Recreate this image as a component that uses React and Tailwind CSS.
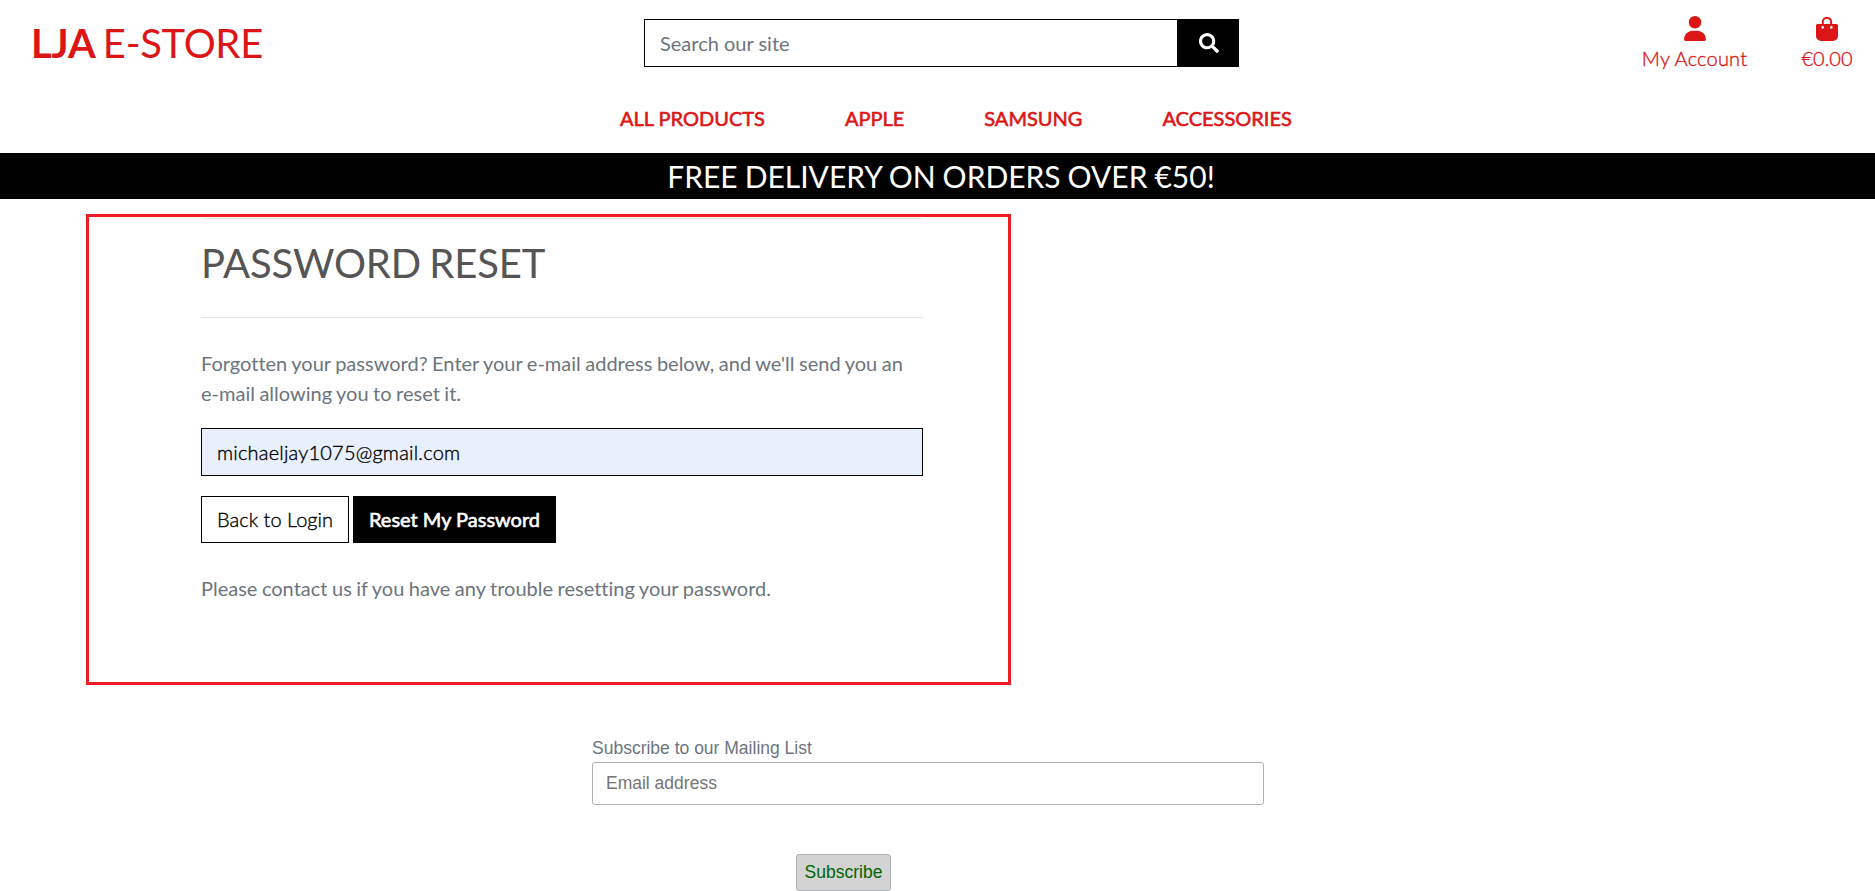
import { FaSearch } from "react-icons/fa";
import { FaUser } from "react-icons/fa6";

function BagIcon() {
  return (
    <svg viewBox="0 0 22 25" className="h-[25px] w-[22px]" fill="none">
      <path d="M6.8 9V6a4.2 4.2 0 0 1 8.4 0v3" stroke="currentColor" strokeWidth="2" />
      <path
        fillRule="evenodd"
        fill="currentColor"
        d="M1.5 8h19A1.5 1.5 0 0 1 22 9.500V20a5 5 0 0 1-5 5H5a5 5 0 0 1-5-5V9.500A1.500 1.500 0 0 1 1.500 8ZM6.700 10.100a1.300 1.300 0 1 0 0 2.600a1.300 1.300 0 0 0 0-2.600ZM15.300 10.100a1.300 1.300 0 1 0 0 2.600a1.300 1.300 0 0 0 0-2.600Z"
      />
    </svg>
  );
}

function Header() {
  return (
    <header className="flex h-[153px] flex-col text-[#dc1616]">
      <div className="flex h-[86px] items-start">
        <a className="mt-[13px] ml-[31px] w-[613px] text-[40px] leading-[60px] tracking-[-0.3px] whitespace-nowrap [word-spacing:-2.5px]">
          <strong className="font-bold">LJA</strong> E-STORE
        </a>
        <form className="mt-[19px] flex h-12 w-[595px]">
          <input
            placeholder="Search our site"
            className="min-w-0 flex-1 border border-black px-[15px] text-[20px] placeholder:text-[#6c757d] placeholder:opacity-100"
          />
          <button type="button" className="flex w-[61px] items-center justify-center bg-black text-white">
            <FaSearch size={20} />
          </button>
        </form>
        <a className="mt-4 ml-[403px] flex w-[105px] flex-col items-center">
          <FaUser className="h-[25px] w-[22px]" />
          <span className="mt-[2px] text-[20px] leading-[30px] font-light tracking-[0.2px] whitespace-nowrap [-webkit-text-stroke:0.35px]">
            My Account
          </span>
        </a>
        <a className="mt-4 ml-[55px] flex w-[50px] flex-col items-center">
          <BagIcon />
          <span className="mt-[2px] text-[20px] leading-[30px] font-light [-webkit-text-stroke:0.35px]">€0.00</span>
        </a>
      </div>
      <nav className="ml-[620px] mt-[17px] flex gap-20 text-[20px] leading-[30px] whitespace-nowrap [-webkit-text-stroke:0.6px]">
        <a>ALL PRODUCTS</a>
        <a>APPLE</a>
        <a>SAMSUNG</a>
        <a>ACCESSORIES</a>
      </nav>
    </header>
  );
}

function ResetPanel() {
  return (
    <main className="mt-[15px] ml-[86px] h-[471px] w-[925px] border-[3px] border-[#ee1c25] pl-28 pr-[85px] pt-px text-[20px] leading-[30px] text-[#6c757d]">
      <div className="border-t border-[#e5e5e5]" />
      <h2 className="mt-[20px] text-[40px] leading-12 tracking-[-0.1px] text-[#555] [word-spacing:-2px]">PASSWORD RESET</h2>
      <div className="mt-[30px] border-t border-[#e5e5e5]" />
      <p className="mt-[30px] [word-spacing:-0.6px]">
        Forgotten your password? Enter your e-mail address below, and we'll send you an e-mail allowing you to reset it.
      </p>
      <input
        defaultValue="michaeljay1075@gmail.com"
        className="mt-5 block h-12 w-full border border-black bg-[#e8f0fe] px-[15px] font-light tracking-[0.2px] text-black [-webkit-text-stroke:0.35px]"
      />
      <div className="mt-5 flex gap-1">
        <button className="h-[47px] w-[148px] border border-black pb-[2px] font-light whitespace-nowrap text-black [-webkit-text-stroke:0.35px]">
          Back to Login
        </button>
        <button className="h-[47px] w-[203px] bg-black pb-[2px] whitespace-nowrap text-white [-webkit-text-stroke:0.6px]">
          Reset My Password
        </button>
      </div>
      <p className="mt-[30px] [word-spacing:-0.6px]">Please contact us if you have any trouble resetting your password.</p>
    </main>
  );
}

function Newsletter() {
  return (
    <form className="mt-[50px] ml-[592px] flex w-[672px] flex-col font-['Liberation_Sans',sans-serif] text-[17.5px]">
      <label className="leading-[27px] text-[#6c757d]">Subscribe to our Mailing List</label>
      <input
        placeholder="Email address"
        className="h-[43px] rounded-[3px] border border-[#abb0b2] px-[13px] placeholder:text-[#757575] placeholder:opacity-100"
      />
      <button
        type="button"
        className="mt-[49px] ml-[204px] h-[37px] w-[95px] rounded-[3px] border border-[#abb0b2] bg-[#d3d3d3] text-[#006400]"
      >
        Subscribe
      </button>
    </form>
  );
}

export default function App() {
  return (
    <div className="h-[891px] w-[1875px] overflow-hidden bg-white font-[Lato,sans-serif] [font-variant-ligatures:none]">
      <Header />
      <div className="flex h-[46px] items-center justify-center bg-black pl-[7px] text-[30px] leading-[46px] text-white [word-spacing:-0.7px]">
        <span>FREE DELIVERY ON ORDERS OVER €50!</span>
      </div>
      <ResetPanel />
      <Newsletter />
    </div>
  );
}
